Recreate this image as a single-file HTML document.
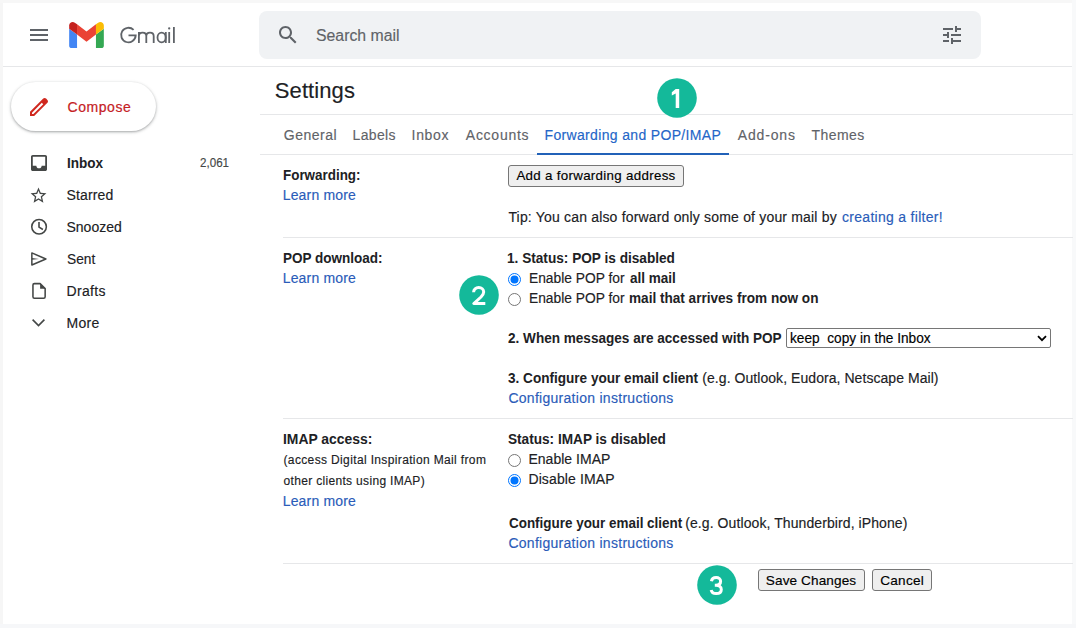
<!DOCTYPE html>
<html><head><meta charset="utf-8">
<style>
html,body{margin:0;padding:0;}
body{width:1076px;height:628px;position:relative;overflow:hidden;background:#fff;font-family:"Liberation Sans",sans-serif;}
.t{position:absolute;white-space:pre;-webkit-text-stroke:0.15px currentColor;}
.t[style*="font-weight:700"]{-webkit-text-stroke:0;}
.a{position:absolute;}
.hl{position:absolute;height:1px;background:#e6e7e9;}
.btn{position:absolute;box-sizing:border-box;background:#efefef;border:1px solid #767676;border-radius:3px;}
.badge{position:absolute;width:40px;height:40px;border-radius:50%;background:#1cb596;color:#fff;font-weight:700;font-size:27px;line-height:40px;text-align:center;}
.radio{position:absolute;width:13px;height:13px;}
svg{position:absolute;overflow:visible;}
</style></head>
<body>
<!-- outer frame -->
<div class="a" style="left:0;top:0;width:3px;height:628px;background:#f6f6f6"></div>
<div class="a" style="left:0;top:0;width:1076px;height:3px;background:#f7f7f7"></div>
<div class="a" style="left:1072px;top:0;width:4px;height:628px;background:#f8f9fa"></div>
<div class="a" style="left:0;top:624px;width:1076px;height:4px;background:#f6f7f9"></div>

<!-- header -->
<svg style="left:0;top:0" width="200" height="60" viewBox="0 0 200 60"><g fill="none" stroke="#5f6368" stroke-width="1.8">
<path d="M133.6 29.9A7.3 7.3 0 1 0 135.7 35.4H128.5"/>
<path d="M138.9 43.1V31.9M138.9 36.2C138.9 34 140.4 32.7 142.6 32.7C144.8 32.7 146.3 34 146.3 36.2V43.1M146.3 36.2C146.3 34 147.8 32.7 150 32.7C152.2 32.7 153.7 34 153.7 36.2V43.1"/>
<ellipse cx="161.6" cy="37.55" rx="4.1" ry="4.85"/>
<path d="M165.8 31.9V43.1M169.2 31.9V43.1M173.9 27V43.1"/>
</g><circle cx="169.2" cy="28.4" r="1.15" fill="#5f6368"/></svg>

<div class="a" style="left:30px;top:29px;width:18px;height:2px;background:#5f6368"></div>
<div class="a" style="left:30px;top:34px;width:18px;height:2px;background:#5f6368"></div>
<div class="a" style="left:30px;top:39px;width:18px;height:2px;background:#5f6368"></div>

<svg style="left:69px;top:22px" width="35" height="26" viewBox="52 42 88 66">
<path fill="#4285f4" d="M58 108h14V74L52 59v43c0 3.320 2.690 6 6 6"/>
<path fill="#34a853" d="M120 108h14c3.32 0 6-2.690 6-6V59l-20 15"/>
<path fill="#fbbc04" d="M120 48v26l20-15v-8c0-7.420-8.470-11.650-14.400-7.200"/>
<path fill="#ea4335" d="M72 74V48l24 18 24-18v26L96 92"/>
<path fill="#c5221f" d="M52 51v8l20 15V48l-5.600-4.200c-5.940-4.450-14.400-.220-14.400 7.200"/>
</svg>

<div class="a" style="left:259px;top:11px;width:722px;height:47.5px;border-radius:8px;background:#f0f2f4"></div>
<svg style="left:276px;top:22.6px" width="24" height="24" viewBox="0 0 24 24"><path fill="#5f6368" d="M15.5 14h-.79l-.28-.27C15.41 12.59 16 11.11 16 9.5 16 5.91 13.09 3 9.5 3S3 5.91 3 9.5 5.91 16 9.5 16c1.61 0 3.090-.59 4.230-1.570l.27.28v.79l5 4.990L20.490 19l-4.990-5zm-6 0C7.010 14 5 11.990 5 9.5S7.010 5 9.5 5 14 7.010 14 9.5 11.990 14 9.5 14z"/></svg>
<svg style="left:940px;top:23px" width="24" height="24" viewBox="0 0 24 24"><path fill="#5f6368" d="M3 17v2h6v-2H3zM3 5v2h10V5H3zm10 16v-2h8v-2h-8v-2h-2v6h2zM7 9v2H3v2h4v2h2V9H7zm14 4v-2H11v2h10zm-6-4h2V7h4V5h-4V3h-2v6z"/></svg>

<div class="hl" style="left:3px;top:66px;width:1069px;"></div>

<!-- compose -->
<div class="a" style="left:11px;top:82px;width:145px;height:49px;border-radius:25px;background:#fff;box-shadow:0 1px 2px 0 rgba(60,64,67,.30),0 1px 3px 1px rgba(60,64,67,.15)"></div>
<svg style="left:27px;top:94.7px" width="24" height="24" viewBox="0 0 24 24"><path fill="#d0281f" d="M20.41 4.94l-1.35-1.35c-.78-.78-2.05-.78-2.83 0L3 16.82V21h4.18L20.41 7.77c.79-.78.79-2.05 0-2.83zm-14 14.12L5 19v-1.36l9.82-9.82 1.41 1.41-9.82 9.83z"/></svg>

<!-- sidebar icons -->
<svg style="left:31px;top:155px" width="16" height="16" viewBox="3 3 18 18"><path fill="#444746" d="M19 3H5c-1.1 0-2 .9-2 2v14c0 1.1.9 2 2 2h14c1.1 0 2-.9 2-2V5c0-1.1-.9-2-2-2zm0 12h-4c0 1.66-1.35 3-3 3s-3-1.34-3-3H5V5h14v10z"/></svg>
<svg style="left:29px;top:185.7px" width="19" height="19" viewBox="0 0 24 24"><path fill="#444746" d="M22 9.24l-7.19-.62L12 2 9.19 8.63 2 9.24l5.46 4.73L5.82 21 12 17.27 18.18 21l-1.63-7.03L22 9.24zM12 15.4l-3.76 2.27 1-4.28-3.32-2.88 4.38-.38L12 6.1l1.71 4.04 4.38.38-3.32 2.88 1 4.28L12 15.4z"/></svg>
<svg style="left:28px;top:215px" width="22" height="22" viewBox="0 0 22 22"><circle cx="11.05" cy="11.75" r="7.3" fill="none" stroke="#444746" stroke-width="1.55"/><path fill="none" stroke="#444746" stroke-width="1.6" d="M11 7.1V12.1L14.9 14.5"/></svg>
<svg style="left:28px;top:248px" width="22" height="22" viewBox="0 0 22 22"><path fill="none" stroke="#444746" stroke-width="1.5" stroke-linejoin="round" d="M3.85 4.9L17.9 10.95L3.85 17Z"/><path fill="#444746" d="M3.8 10.1L11 10.95L3.8 11.8Z"/></svg>
<svg style="left:28px;top:280px" width="22" height="22" viewBox="0 0 22 22"><path fill="none" stroke="#444746" stroke-width="1.55" stroke-linejoin="round" d="M12.1 3.6H6.4Q4.95 3.6 4.95 5.05V16.7Q4.95 18.15 6.4 18.15H15.7Q17.15 18.15 17.15 16.7V8.65Z"/><path fill="#444746" d="M12.1 3.4L17.4 8.7H12.1Z"/></svg>
<svg style="left:32.4px;top:319.2px" width="13" height="8" viewBox="0 0 13 8"><path fill="none" stroke="#444746" stroke-width="1.6" d="M0.6 0.6L6.5 6.6L12.4 0.6"/></svg>

<!-- settings lines -->
<div class="hl" style="left:260px;top:114px;width:813px;"></div>
<div class="hl" style="left:260px;top:154px;width:813px;"></div>
<div class="a" style="left:537px;top:153px;width:192px;height:2px;background:#2161b8"></div>

<div class="hl" style="left:283px;top:237px;width:790px;"></div>
<div class="hl" style="left:283px;top:418px;width:790px;"></div>
<div class="hl" style="left:283px;top:563px;width:790px;"></div>

<!-- buttons -->
<div class="btn" style="left:508px;top:165px;width:176px;height:22px"></div>
<div class="btn" style="left:758px;top:569px;width:107px;height:22px"></div>
<div class="btn" style="left:872px;top:569px;width:60px;height:22px"></div>

<!-- select -->
<div class="a" style="left:786px;top:328px;width:265px;height:20px;box-sizing:border-box;border:1px solid #767676;border-radius:2px;background:#fff"></div>
<svg style="left:1037px;top:335px" width="10" height="7" viewBox="0 0 10 7"><path fill="none" stroke="#000" stroke-width="1.8" d="M1 1.2L5 5.2L9 1.2"/></svg>

<!-- radios -->
<svg class="radio" style="left:508px;top:273px" width="13" height="13" viewBox="0 0 13 13"><circle cx="6.5" cy="6.5" r="6" fill="#fff" stroke="#0075ff" stroke-width="1"/><circle cx="6.5" cy="6.5" r="4" fill="#0075ff"/></svg>
<svg class="radio" style="left:508px;top:293px" width="13" height="13" viewBox="0 0 13 13"><circle cx="6.5" cy="6.5" r="6" fill="#fff" stroke="#767676" stroke-width="1"/></svg>
<svg class="radio" style="left:508px;top:454px" width="13" height="13" viewBox="0 0 13 13"><circle cx="6.5" cy="6.5" r="6" fill="#fff" stroke="#767676" stroke-width="1"/></svg>
<svg class="radio" style="left:508px;top:474px" width="13" height="13" viewBox="0 0 13 13"><circle cx="6.5" cy="6.5" r="6" fill="#fff" stroke="#0075ff" stroke-width="1"/><circle cx="6.5" cy="6.5" r="4" fill="#0075ff"/></svg>

<!-- badges -->
<svg style="left:657px;top:78px" width="40" height="40" viewBox="0 0 40 40"><circle cx="20" cy="20" r="19.8" fill="#14b99a"/><path fill="#fff" d="M18.7 11H22.2V30H18.7V15.6L14.8 17.6V14.2Z"/></svg>
<svg style="left:459px;top:275px" width="40" height="40" viewBox="0 0 40 40"><circle cx="20" cy="20" r="19.8" fill="#14b99a"/><path fill="none" stroke="#fff" stroke-width="3" stroke-linejoin="round" d="M14.6 17.2C14.6 14.3 16.8 12.6 19.7 12.6C22.6 12.6 24.7 14.4 24.7 17C24.7 19 23.6 20.4 22 22L14.8 28.6H26.3"/></svg>
<svg style="left:697px;top:565px" width="40" height="40" viewBox="0 0 40 40"><circle cx="20" cy="20" r="19.8" fill="#14b99a"/><path fill="none" stroke="#fff" stroke-width="3" d="M14.4 16.2C14.8 13.9 16.8 12.6 19.2 12.6C21.8 12.6 23.6 14.2 23.6 16.3C23.6 18.6 21.8 20.2 19 20.2H17.8M19 20.2C22.2 20.2 24.3 22 24.3 24.4C24.3 27 22.2 28.6 19.2 28.6C16.6 28.6 14.6 27.3 14.2 25"/></svg>
<div class='t' style='top:28px;font-size:16px;line-height:16px;font-weight:400;color:#5f6368;transform:scaleX(0.9880);transform-origin:0 0;left:315.51px;'>Search mail</div>
<div class='t' style='top:100px;font-size:14px;line-height:14px;font-weight:400;color:#c5221f;letter-spacing:0.533px;left:67.60px;-webkit-text-stroke:0.2px #c5221f;'>Compose</div>
<div class='t' style='top:156px;font-size:14px;line-height:14px;font-weight:700;color:#202124;transform:scaleX(0.9667);transform-origin:0 0;left:66.53px;'>Inbox</div>
<div class='t' style='top:157px;font-size:12px;line-height:12px;font-weight:400;color:#444746;transform:scaleX(0.9667);transform-origin:0 0;left:200.20px;'>2,061</div>
<div class='t' style='top:188px;font-size:14px;line-height:14px;font-weight:400;color:#202124;letter-spacing:0.133px;left:66.50px;'>Starred</div>
<div class='t' style='top:220px;font-size:14px;line-height:14px;font-weight:400;color:#202124;left:66.50px;'>Snoozed</div>
<div class='t' style='top:252px;font-size:14px;line-height:14px;font-weight:400;color:#202124;transform:scaleX(0.9786);transform-origin:0 0;left:66.52px;'>Sent</div>
<div class='t' style='top:284px;font-size:14px;line-height:14px;font-weight:400;color:#202124;letter-spacing:0.320px;left:66.50px;'>Drafts</div>
<div class='t' style='top:316px;font-size:14px;line-height:14px;font-weight:400;color:#202124;letter-spacing:0.300px;left:66.50px;'>More</div>
<div class='t' style='top:80px;font-size:22px;line-height:22px;font-weight:400;color:#202124;letter-spacing:0.086px;left:274.80px;'>Settings</div>
<div class='t' style='top:128px;font-size:14px;line-height:14px;font-weight:400;color:#5f6368;letter-spacing:0.517px;left:283.80px;'>General</div>
<div class='t' style='top:128px;font-size:14px;line-height:14px;font-weight:400;color:#5f6368;letter-spacing:0.360px;left:352.50px;'>Labels</div>
<div class='t' style='top:128px;font-size:14px;line-height:14px;font-weight:400;color:#5f6368;letter-spacing:0.675px;left:411.60px;'>Inbox</div>
<div class='t' style='top:128px;font-size:14px;line-height:14px;font-weight:400;color:#5f6368;letter-spacing:0.743px;left:465.80px;'>Accounts</div>
<div class='t' style='top:128px;font-size:14px;line-height:14px;font-weight:400;color:#2466c8;letter-spacing:0.341px;left:544.50px;'>Forwarding and POP/IMAP</div>
<div class='t' style='top:128px;font-size:14px;line-height:14px;font-weight:400;color:#5f6368;letter-spacing:0.850px;left:737.70px;'>Add-ons</div>
<div class='t' style='top:128px;font-size:14px;line-height:14px;font-weight:400;color:#5f6368;letter-spacing:0.420px;left:811.50px;'>Themes</div>
<div class='t' style='top:168px;font-size:14px;line-height:14px;font-weight:700;color:#202124;transform:scaleX(0.9582);transform-origin:0 0;left:282.54px;'>Forwarding:</div>
<div class='t' style='top:188px;font-size:14px;line-height:14px;font-weight:400;color:#2a5cb9;letter-spacing:0.167px;left:282.70px;'>Learn more</div>
<div class='t' style='top:169px;font-size:13.33px;line-height:13.33px;font-weight:400;color:#000;letter-spacing:0.304px;left:516.40px;'>Add a forwarding address</div>
<div class='t' style='top:210px;font-size:14px;line-height:14px;font-weight:400;color:#202124;letter-spacing:0.180px;left:508.40px;'>Tip: You can also forward only some of your mail by</div>
<div class='t' style='top:210px;font-size:14px;line-height:14px;font-weight:400;color:#2a5cb9;letter-spacing:0.294px;left:842.00px;'>creating a filter!</div>
<div class='t' style='top:251px;font-size:14px;line-height:14px;font-weight:700;color:#202124;transform:scaleX(0.9644);transform-origin:0 0;left:282.64px;'>POP download:</div>
<div class='t' style='top:271px;font-size:14px;line-height:14px;font-weight:400;color:#2a5cb9;letter-spacing:0.167px;left:282.70px;'>Learn more</div>
<div class='t' style='top:251px;font-size:14px;line-height:14px;font-weight:700;color:#202124;transform:scaleX(0.9737);transform-origin:0 0;left:507.43px;'>1. Status: POP is disabled</div>
<div class='t' style='top:271px;font-size:14px;line-height:14px;font-weight:400;color:#202124;transform:scaleX(0.9844);transform-origin:0 0;left:528.82px;'>Enable POP for</div>
<div class='t' style='top:271px;font-size:14px;line-height:14px;font-weight:700;color:#202124;transform:scaleX(0.9660);transform-origin:0 0;left:629.80px;'>all mail</div>
<div class='t' style='top:291px;font-size:14px;line-height:14px;font-weight:400;color:#202124;transform:scaleX(0.9844);transform-origin:0 0;left:528.82px;'>Enable POP for</div>
<div class='t' style='top:291px;font-size:14px;line-height:14px;font-weight:700;color:#202124;transform:scaleX(0.9701);transform-origin:0 0;left:628.83px;'>mail that arrives from now on</div>
<div class='t' style='top:331px;font-size:14px;line-height:14px;font-weight:700;color:#202124;transform:scaleX(0.9688);transform-origin:0 0;left:508.40px;'>2. When messages are accessed with POP</div>
<div class='t' style='top:331px;font-size:14px;line-height:14px;font-weight:400;color:#000;transform:scaleX(0.9769);transform-origin:0 0;left:790.32px;'>keep  copy in the Inbox</div>
<div class='t' style='top:371px;font-size:14px;line-height:14px;font-weight:700;color:#202124;transform:scaleX(0.9694);transform-origin:0 0;left:508.40px;'>3. Configure your email client</div>
<div class='t' style='top:371px;font-size:14px;line-height:14px;font-weight:400;color:#202124;letter-spacing:0.056px;left:702.30px;'>(e.g. Outlook, Eudora, Netscape Mail)</div>
<div class='t' style='top:391px;font-size:14px;line-height:14px;font-weight:400;color:#2a5cb9;letter-spacing:0.280px;left:508.40px;'>Configuration instructions</div>
<div class='t' style='top:432px;font-size:14px;line-height:14px;font-weight:700;color:#202124;transform:scaleX(0.9932);transform-origin:0 0;left:282.51px;'>IMAP access:</div>
<div class='t' style='top:454px;font-size:12px;line-height:12px;font-weight:400;color:#202124;letter-spacing:0.361px;left:283.50px;'>(access Digital Inspiration Mail from</div>
<div class='t' style='top:475px;font-size:12px;line-height:12px;font-weight:400;color:#202124;letter-spacing:0.325px;left:283.50px;'>other clients using IMAP)</div>
<div class='t' style='top:494px;font-size:14px;line-height:14px;font-weight:400;color:#2a5cb9;letter-spacing:0.167px;left:282.70px;'>Learn more</div>
<div class='t' style='top:432px;font-size:14px;line-height:14px;font-weight:700;color:#202124;transform:scaleX(0.9728);transform-origin:0 0;left:508.40px;'>Status: IMAP is disabled</div>
<div class='t' style='top:452px;font-size:14px;line-height:14px;font-weight:400;color:#202124;letter-spacing:0.030px;left:528.40px;'>Enable IMAP</div>
<div class='t' style='top:472px;font-size:14px;line-height:14px;font-weight:400;color:#202124;letter-spacing:0.127px;left:528.40px;'>Disable IMAP</div>
<div class='t' style='top:516px;font-size:14px;line-height:14px;font-weight:700;color:#202124;transform:scaleX(0.9597);transform-origin:0 0;left:508.60px;'>Configure your email client</div>
<div class='t' style='top:516px;font-size:14px;line-height:14px;font-weight:400;color:#202124;letter-spacing:0.088px;left:685.20px;'>(e.g. Outlook, Thunderbird, iPhone)</div>
<div class='t' style='top:536px;font-size:14px;line-height:14px;font-weight:400;color:#2a5cb9;letter-spacing:0.280px;left:508.40px;'>Configuration instructions</div>
<div class='t' style='top:574px;font-size:13.6px;line-height:13.6px;font-weight:400;color:#000;letter-spacing:0.109px;left:765.80px;'>Save Changes</div>
<div class='t' style='top:574px;font-size:13.6px;line-height:13.6px;font-weight:400;color:#000;letter-spacing:0.220px;left:880.30px;'>Cancel</div>
</body></html>
